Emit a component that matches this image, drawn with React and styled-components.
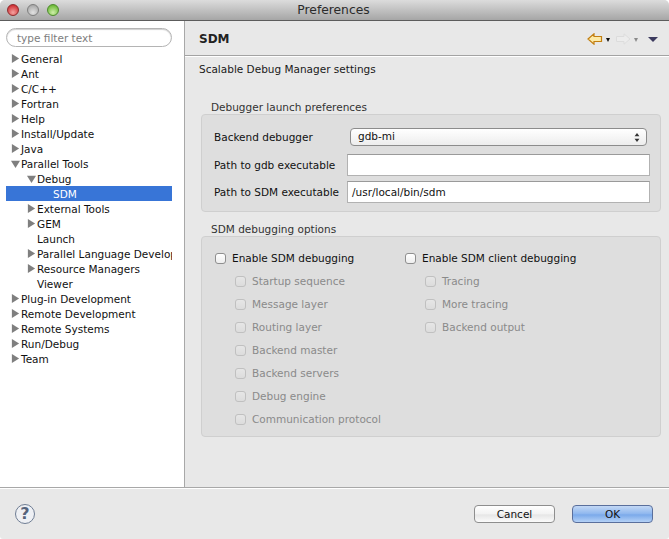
import React from "react";
import styled, { createGlobalStyle } from "styled-components";

const GlobalStyle = createGlobalStyle`
  html, body { margin: 0; padding: 0; background: #fff; }
  body { font-family: "DejaVu Sans", "Liberation Sans", sans-serif; font-size: 10.5px; color: #1a1a1a; }
`;

const tree = [
  { label: "General", level: 0, arrow: "right" },
  { label: "Ant", level: 0, arrow: "right" },
  { label: "C/C++", level: 0, arrow: "right" },
  { label: "Fortran", level: 0, arrow: "right" },
  { label: "Help", level: 0, arrow: "right" },
  { label: "Install/Update", level: 0, arrow: "right" },
  { label: "Java", level: 0, arrow: "right" },
  { label: "Parallel Tools", level: 0, arrow: "down" },
  { label: "Debug", level: 1, arrow: "down" },
  { label: "SDM", level: 2, selected: true },
  { label: "External Tools", level: 1, arrow: "right" },
  { label: "GEM", level: 1, arrow: "right" },
  { label: "Launch", level: 1 },
  { label: "Parallel Language Development Tools", level: 1, arrow: "right" },
  { label: "Resource Managers", level: 1, arrow: "right" },
  { label: "Viewer", level: 1 },
  { label: "Plug-in Development", level: 0, arrow: "right" },
  { label: "Remote Development", level: 0, arrow: "right" },
  { label: "Remote Systems", level: 0, arrow: "right" },
  { label: "Run/Debug", level: 0, arrow: "right" },
  { label: "Team", level: 0, arrow: "right" },
];

const leftOptions = [
  "Startup sequence",
  "Message layer",
  "Routing layer",
  "Backend master",
  "Backend servers",
  "Debug engine",
  "Communication protocol",
];
const rightOptions = ["Tracing", "More tracing", "Backend output"];

const TreeArrow = ({ dir }) => (
  <ArrowSvg viewBox="0 0 10 10">
    {dir === "down" ? (
      <polygon points="0,2 10,2 5,10" fill="#7f7f7f" />
    ) : (
      <polygon points="1,0 9,5 1,10" fill="#7f7f7f" />
    )}
  </ArrowSvg>
);

const App = () => {
  return (
    <Window>
      <GlobalStyle />
      <TitleBar>
        <Lights>
          <Light $c1="#f4a3a0" $c2="#cf2f33" $b="#8e2a2c" />
          <Light $c1="#e2e2e2" $c2="#a9a9a9" $b="#7e7e7e" />
          <Light $c1="#cfeeaa" $c2="#6dba37" $b="#4c8a2c" />
        </Lights>
        <Title>Preferences</Title>
      </TitleBar>
      <Main>
        <Sidebar>
          <FilterBox>type filter text</FilterBox>
          <Tree>
            {tree.map((t) => (
              <TreeRow key={t.label} $selected={t.selected}>
                <Indent $level={t.level} />
                <ArrowSlot>{t.arrow && <TreeArrow dir={t.arrow} />}</ArrowSlot>
                <TreeLabel>{t.label}</TreeLabel>
              </TreeRow>
            ))}
          </Tree>
        </Sidebar>
        <Content>
          <Header>
            <HeaderTitle>SDM</HeaderTitle>
            <NavIcons>
              <svg width="16" height="12" viewBox="0 0 16 12">
                <path d="M1 6 L7 0.8 V3.5 H14.5 V8.5 H7 V11.2 Z" fill="#fdeaa6" stroke="#c27f12" strokeWidth="1.2" />
              </svg>
              <SmallDrop $color="#111" />
              <svg width="16" height="12" viewBox="0 0 16 12">
                <path d="M15 6 L9 0.8 V3.5 H1.5 V8.5 H9 V11.2 Z" fill="#ececec" stroke="#dcdcdc" strokeWidth="1" />
              </svg>
              <SmallDrop $color="#8a8a8a" />
              <MenuDrop />
            </NavIcons>
          </Header>
          <Body>
            <Description>Scalable Debug Manager settings</Description>
            <GroupLabel $top={24}>Debugger launch preferences</GroupLabel>
            <GroupBox $height={98}>
              <FormRow $top={11}>
                <FieldLabel>Backend debugger</FieldLabel>
                <SelectBox>
                  gdb-mi
                  <SelectArrows viewBox="0 0 7 11" width="6" height="9">
                    <polygon points="3.5,0 6.5,4 0.5,4" fill="#333" />
                    <polygon points="3.5,11 6.5,7 0.5,7" fill="#333" />
                  </SelectArrows>
                </SelectBox>
              </FormRow>
              <FormRow $top={6}>
                <FieldLabel>Path to gdb executable</FieldLabel>
                <TextField />
              </FormRow>
              <FormRow $top={5}>
                <FieldLabel>Path to SDM executable</FieldLabel>
                <TextField>/usr/local/bin/sdm</TextField>
              </FormRow>
            </GroupBox>
            <GroupLabel $top={10}>SDM debugging options</GroupLabel>
            <GroupBox $height={201}>
              <Columns>
                <LeftColumn>
                  <CheckRow>
                    <Check />
                    Enable SDM debugging
                  </CheckRow>
                  {leftOptions.map((o) => (
                    <SubRow key={o}>
                      <Check $disabled />
                      {o}
                    </SubRow>
                  ))}
                </LeftColumn>
                <div>
                  <CheckRow>
                    <Check />
                    Enable SDM client debugging
                  </CheckRow>
                  {rightOptions.map((o) => (
                    <SubRow key={o}>
                      <Check $disabled />
                      {o}
                    </SubRow>
                  ))}
                </div>
              </Columns>
            </GroupBox>
          </Body>
        </Content>
      </Main>
      <Footer>
        <HelpIcon>?</HelpIcon>
        <Buttons>
          <Button>Cancel</Button>
          <Button $primary>OK</Button>
        </Buttons>
      </Footer>
    </Window>
  );
};

const Window = styled.div`
  width: 669px;
  height: 539px;
  display: flex;
  flex-direction: column;
  overflow: hidden;
  background: #e8e8e8;
  border-radius: 5px 5px 3px 3px;
`;

const TitleBar = styled.div`
  position: relative;
  flex: 0 0 20px;
  height: 20px;
  background: linear-gradient(#dcdcdc, #a6a6a6);
  border-bottom: 1px solid #5c5c5c;
  display: flex;
  align-items: center;
  justify-content: center;
  padding-right: 2px;
`;

const Lights = styled.div`
  position: absolute;
  left: 7px;
  top: 4px;
  display: flex;
  gap: 8px;
`;

const Light = styled.div`
  width: 12px;
  height: 12px;
  box-sizing: border-box;
  border-radius: 50%;
  border: 1px solid ${(p) => p.$b};
  background: radial-gradient(circle at 50% 75%, ${(p) => p.$c1}, ${(p) => p.$c2} 80%);
`;

const Title = styled.div`
  font-size: 12.3px;
  color: #2b2b2b;
`;

const Main = styled.div`
  flex: 0 0 466px;
  height: 466px;
  display: flex;
  border-bottom: 1px solid #a8a8a8;
`;

const Sidebar = styled.div`
  flex: 0 0 185px;
  width: 185px;
  box-sizing: border-box;
  background: #fff;
  border-right: 1px solid #a8a8a8;
  padding: 7px 12px 0 6px;
  overflow: hidden;
`;

const FilterBox = styled.div`
  width: 166px;
  height: 19px;
  box-sizing: border-box;
  border: 1px solid #b4b4b4;
  box-shadow: inset 0 1px 1px #d0d0d0;
  border-radius: 10px;
  padding-left: 10px;
  line-height: 19px;
  color: #7d7d7d;
  font-size: 10.5px;
`;

const Tree = styled.div`
  margin-top: 4px;
`;

const TreeRow = styled.div`
  height: 15px;
  display: flex;
  align-items: center;
  width: 166px;
  overflow: hidden;
  white-space: nowrap;
  background: ${(p) => (p.$selected ? "#3875d7" : "transparent")};
  color: ${(p) => (p.$selected ? "#fff" : "#111")};
`;

const Indent = styled.span`
  flex: 0 0 ${(p) => p.$level * 16}px;
`;

const ArrowSlot = styled.span`
  flex: 0 0 15px;
  display: flex;
  padding-left: 5px;
  box-sizing: border-box;
`;

const ArrowSvg = styled.svg`
  width: 9px;
  height: 9px;
`;

const TreeLabel = styled.span`
  margin-left: 0;
`;

const Content = styled.div`
  flex: 1;
  display: flex;
  flex-direction: column;
`;

const Header = styled.div`
  flex: 0 0 35px;
  height: 35px;
  box-sizing: border-box;
  border-bottom: 1px solid #a3a3a3;
  box-shadow: 0 1px 0 #fff;
  display: flex;
  align-items: center;
  justify-content: space-between;
  padding: 2px 11px 0 14px;
`;

const HeaderTitle = styled.div`
  font-size: 12px;
  font-weight: bold;
  color: #222;
`;

const NavIcons = styled.div`
  display: flex;
  align-items: center;
  gap: 3px;
`;

const SmallDrop = styled.span`
  width: 0;
  height: 0;
  margin-right: 2px;
  margin-top: 1px;
  border-left: 2.5px solid transparent;
  border-right: 2.5px solid transparent;
  border-top: 4px solid ${(p) => p.$color};
`;

const MenuDrop = styled.span`
  width: 0;
  height: 0;
  margin-left: 5px;
  border-left: 5px solid transparent;
  border-right: 5px solid transparent;
  border-top: 5px solid #3c3a5e;
`;

const Body = styled.div`
  flex: 1;
  padding: 6px 8px 0 14px;
`;

const Description = styled.div`
  height: 14px;
  line-height: 14px;
`;

const GroupLabel = styled.div`
  margin: ${(p) => p.$top}px 0 0 12px;
  height: 14px;
  line-height: 14px;
  color: #333;
`;

const GroupBox = styled.div`
  height: ${(p) => p.$height}px;
  box-sizing: border-box;
  margin: 0 0 0 2px;
  background: #dedede;
  border: 1px solid #cfcfcf;
  border-radius: 4px;
`;

const FormRow = styled.div`
  display: flex;
  align-items: center;
  height: 22px;
  margin-top: ${(p) => p.$top}px;
  padding: 0 10px 0 12px;
`;

const FieldLabel = styled.div`
  flex: 0 0 133px;
  color: #111;
`;

const SelectBox = styled.div`
  position: relative;
  width: 297px;
  margin-left: 3px;
  height: 18px;
  box-sizing: border-box;
  border: 1px solid #8c8c8c;
  border-radius: 4px;
  background: linear-gradient(#ffffff, #ededed);
  padding-left: 7px;
  line-height: 15px;
  color: #111;
`;

const SelectArrows = styled.svg`
  position: absolute;
  right: 6px;
  top: 4px;
`;

const TextField = styled.div`
  flex: 1;
  height: 22px;
  box-sizing: border-box;
  background: #fff;
  border: 1px solid #b2b2b2;
  border-top-color: #9a9a9a;
  padding-left: 4px;
  line-height: 20px;
  color: #111;
`;

const Columns = styled.div`
  display: flex;
  padding: 13px 0 0 13px;
`;

const LeftColumn = styled.div`
  width: 190px;
`;

const CheckRow = styled.div`
  display: flex;
  align-items: center;
  gap: 6px;
  height: 16px;
  margin-bottom: 7px;
  color: #111;
  white-space: nowrap;
`;

const SubRow = styled(CheckRow)`
  padding-left: 20px;
  color: #8a8a8a;
`;

const Check = styled.span`
  flex: 0 0 11px;
  width: 11px;
  height: 11px;
  box-sizing: border-box;
  border-radius: 3px;
  border: 1px solid ${(p) => (p.$disabled ? "#c0c0c0" : "#8f8f8f")};
  background: ${(p) => (p.$disabled ? "linear-gradient(#e6e6e6, #dcdcdc)" : "linear-gradient(#ffffff, #eeeeee)")};
`;

const Footer = styled.div`
  flex: 1;
  display: flex;
  align-items: center;
  justify-content: space-between;
  padding: 0 16px 1px 15px;
  border-top: 1px solid #fff;
`;

const HelpIcon = styled.div`
  width: 20px;
  height: 20px;
  box-sizing: border-box;
  border: 1.5px solid #6f7d93;
  border-radius: 50%;
  background: #eef0f4;
  color: #56647c;
  font-weight: bold;
  font-size: 16px;
  line-height: 17px;
  text-align: center;
`;

const Buttons = styled.div`
  display: flex;
  gap: 17px;
`;

const Button = styled.div`
  width: 81px;
  height: 18px;
  box-sizing: border-box;
  border-radius: 4px;
  border: 1px solid ${(p) => (p.$primary ? "#5a6f9c" : "#8e8e8e")};
  background: ${(p) =>
    p.$primary
      ? "linear-gradient(#c3d8f5, #8db6ee 50%, #7aa9ea 55%, #b4d1f6)"
      : "linear-gradient(#ffffff, #f2f2f2 50%, #e6e6e6 55%, #fbfbfb)"};
  text-align: center;
  line-height: 16px;
  color: #111;
`;

export default App;
